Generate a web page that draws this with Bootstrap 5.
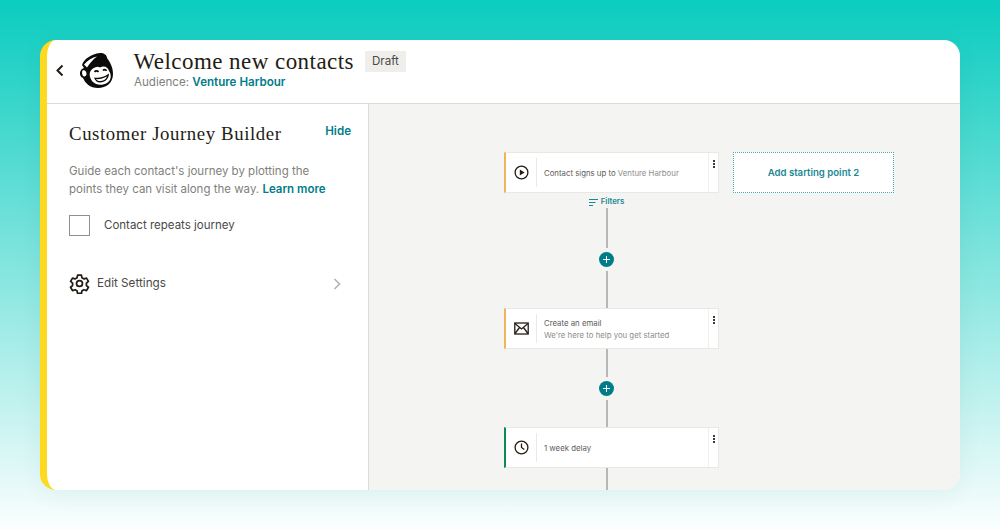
<!DOCTYPE html>
<html lang="en">
<head>
  <meta charset="UTF-8">
  <title>Customer Journey Builder</title>
  <meta name="viewport" content="width=device-width, initial-scale=1">
  <link href="https://cdn.jsdelivr.net/npm/bootstrap@5.3.2/dist/css/bootstrap.min.css" rel="stylesheet">
  <style>
    html, body { height: 530px; overflow: hidden; }
    body { background: linear-gradient(180deg, #0accbf 0%, #fbfefe 100%); font-family: "Inter", "Liberation Sans", sans-serif; padding: 40px 40px 40px; color: #3b3938; }
    .app-shell { height: 450px; border-radius: 16px; overflow: hidden; background: #fff; border-left: 7px solid #ffd91f; box-shadow: 0 4px 24px rgba(0,60,60,.06); }
    .app-head { height: 64px; border-bottom: 1px solid #dcdcda; flex: none; padding-bottom: 4px; }
    .back-btn { width: 87px; padding-left: 8px; }
    .back-arrow { margin-top: 2px; }
    .logo-mark { margin-left: 14px; margin-top: 1px; }
    .head-title { font-family: "Liberation Serif", serif; font-size: 23px; line-height: 26px; color: #241c15; letter-spacing: .45px; margin: 0 0 0 -.5px; }
    .draft-tag { background: #efeeea; font-size: 11.6px; line-height: 21px; padding: 0 7px; color: #4b4947; margin-left: 11px; margin-top: -2px; }
    .head-sub { font-size: 11.6px; line-height: 15px; color: #80807d; margin-top: 0; }
    .teal-link { color: #007c89; font-weight: 600; text-decoration: none; }
    .side-panel { width: 322px; flex: none; border-right: 1px solid #dcdcda; padding: 20px 17px 0 22px; }
    .side-title { font-family: "Liberation Serif", serif; font-size: 18.8px; line-height: 20px; color: #241c15; letter-spacing: .6px; margin: 0; }
    .side-hide { font-size: 11.6px; line-height: 16px; margin-top: -1px; }
    .side-text { font-size: 11.5px; line-height: 18px; color: #7f7f7c; margin: 18px 0 0; max-width: 262px; }
    .repeat-box { width: 21px; height: 21px; border: 1px solid #8f8f8d; background: #fff; flex: none; }
    .repeat-row { margin-top: 17px; gap: 14px; font-size: 11.5px; color: #4b4947; }
    .settings-row { margin-top: 37px; font-size: 11.7px; color: #4b4947; }
    .settings-name { margin-left: 7px; }
    .go-next { margin-right: 10px; }
    .journey-canvas { background: #f4f4f2; padding: 48px 0 0 135px; overflow: hidden; }
    .step-node { width: 215px; height: 41px; background: #fff; border: 1px solid #e8e8e6; border-left: 2px solid #f1b35c; flex: none; }
    .step-node.is-delay { border-left-color: #0d8a57; }
    .step-icon { width: 30px; flex: none; }
    .step-main { border-left: 1px solid #e9e9e7; margin: 5px 0; padding-left: 7px; font-size: 7.8px; line-height: 12px; color: #5d5c5a; flex: 1; height: 29px; }
    .step-muted { color: #8e8e8b; }
    .step-menu { width: 10px; flex: none; border-left: 1px solid #efefed; position: relative; }
    .step-menu::before { content: ""; position: absolute; left: 4px; top: 7px; width: 2px; height: 2px; background: #3b3938; box-shadow: 0 3px 0 #3b3938, 0 6px 0 #3b3938; }
    .add-start { width: 161px; height: 41px; margin-left: 14px; padding-top: 1px; background: #fff; border: 1px dotted #4aa9b2; font-size: 9.6px; font-weight: 600; color: #1b8792; }
    .link-col { width: 205px; flex: none; }
    .link-line { width: 2px; background: #b7b7b5; flex: none; }
    .filters-tag { height: 12px; margin-top: 3px; font-size: 7.8px; font-weight: 600; color: #1b8792; gap: 3px; }
    .plus-dot { width: 15px; height: 15px; border-radius: 50%; background: #007c89; flex: none; }
  </style>
</head>
<body>

<div class="app-shell d-flex flex-column">
  <header class="app-head d-flex align-items-center">
    <div class="back-btn d-flex align-items-center">
      <svg class="back-arrow" width="10" height="13" viewBox="0 0 10 13" fill="none"><path d="M7.5 1.5 2.5 6.5l5 5" stroke="#241c15" stroke-width="2"/></svg>
      <svg class="logo-mark" width="34" height="35" viewBox="0 0 34 35">
        <path d="M3 12 C5 6 12 1 21 0 C25 0 28 2 28 5 C31 9 34 14 34 21 C34 30 27 35 19 35 C11 35 6 30 4 25 C1 24 0 20 2 17 C3 16 4 15 5 15 Z" fill="#0c0b0a"/>
        <path d="M5 11.5 C9 7 13 4.5 18 3.5 C14 6.5 11 10 8 14.5 Z" fill="#fff"/>
        <path d="M3.5 17.5 C5.5 16.5 7.5 18 7.5 21 C7.5 23 5.5 24 4 23 C2.8 21 2.8 19 3.5 17.5Z" fill="#fff"/>
        <path d="M11 19 C13 15 18 12.5 21 14.5 C25 12.5 29 14 30 18 C33 22 32 28 28 30 C23 33 16 32 13 28 C11 25 10 22 11 19Z" fill="#fff"/>
        <path d="M15 24.5 C19 25.5 25 24.5 30 20.5 C30 25.5 26 29.5 21 29.5 C18 29.5 16 27.5 15 24.5Z" fill="#0c0b0a"/>
        <path d="M17 26 C20 26.5 24 25.5 28 23.5 C27 26.5 24 28 21 28 C19 28 18 27.5 17 26Z" fill="#fff"/>
        <path d="M15.5 19 C16.5 17.5 18.5 17.5 19.5 19 M24 17.5 C25 16.2 26.8 16.4 27.5 17.8" fill="none" stroke="#0c0b0a" stroke-width="1.6"/>
      </svg>
    </div>
    <div>
      <div class="d-flex align-items-center">
        <h1 class="head-title">Welcome new contacts</h1>
        <span class="draft-tag">Draft</span>
      </div>
      <div class="head-sub">Audience: <a href="#" class="teal-link">Venture Harbour</a></div>
    </div>
  </header>

  <div class="d-flex flex-grow-1 overflow-hidden">
    <aside class="side-panel">
      <div class="d-flex justify-content-between align-items-start">
        <h2 class="side-title">Customer Journey Builder</h2>
        <a href="#" class="teal-link side-hide">Hide</a>
      </div>
      <p class="side-text">Guide each contact's journey by plotting the points they can visit along the way. <a href="#" class="teal-link">Learn more</a></p>
      <div class="repeat-row d-flex align-items-center">
        <span class="repeat-box"></span>
        <span>Contact repeats journey</span>
      </div>
      <div class="settings-row d-flex align-items-center">
        <svg width="21" height="21" viewBox="0 0 24 24" fill="none" stroke="#241c15" stroke-width="2" stroke-linejoin="round"><circle cx="12" cy="12" r="3.4"/><path d="M9.8 2.5h4.4l.6 3 2.3 1.3 2.9-1 2.2 3.8-2.3 2 0 2.7 2.3 2-2.2 3.8-2.9-1-2.3 1.3-.6 3H9.8l-.6-3-2.3-1.3-2.9 1-2.2-3.8 2.3-2 0-2.7-2.3-2 2.2-3.8 2.9 1 2.3-1.3z"/></svg>
        <span class="settings-name">Edit Settings</span>
        <svg class="go-next ms-auto" width="8" height="12" viewBox="0 0 8 12" fill="none"><path d="M1.5 1 6.5 6l-5 5" stroke="#b3b3b1" stroke-width="1.6"/></svg>
      </div>
    </aside>

    <main class="journey-canvas flex-grow-1 d-flex flex-column">
      <div class="d-flex">
        <div class="step-node d-flex align-items-center">
          <div class="step-icon"><svg class="d-block mx-auto" width="15" height="15" viewBox="0 0 15 15"><circle cx="7.5" cy="7.5" r="6.4" fill="none" stroke="#241c15" stroke-width="1.3"/><path d="M5.8 4.5v6l4.8-3z" fill="#241c15"/></svg></div>
          <div class="step-main d-flex align-items-center"><span>Contact signs up to <span class="step-muted">Venture Harbour</span></span></div>
          <div class="step-menu align-self-stretch"></div>
        </div>
        <div class="add-start d-flex align-items-center justify-content-center">Add starting point 2</div>
      </div>

      <div class="link-col d-flex flex-column align-items-center">
        <div class="filters-tag d-flex align-items-center">
          <svg width="9" height="7" viewBox="0 0 9 7" fill="none" stroke="#1b8792" stroke-width="1"><path d="M0 .5h9M0 3.5h6.5M0 6.5h4"/></svg>
          Filters
        </div>
        <div class="link-line" style="height:40px"></div>
        <div class="plus-dot d-flex align-items-center justify-content-center my-1"><svg width="7" height="7" viewBox="0 0 7 7"><path d="M3.5 0v7M0 3.5h7" stroke="#fff" stroke-width="1"/></svg></div>
        <div class="link-line" style="height:37px"></div>
      </div>

      <div class="step-node d-flex align-items-center">
        <div class="step-icon"><svg class="d-block mx-auto" width="15" height="13" viewBox="0 0 15 13" fill="none" stroke="#241c15" stroke-width="1.3"><rect x=".8" y="1" width="13.4" height="11"/><path d="M1 1.5 7.5 7 14 1.5M1 11.5 5.5 5.5M14 11.5 9.5 5.5"/></svg></div>
        <div class="step-main d-flex flex-column justify-content-center"><span>Create an email</span><span class="step-muted">We're here to help you get started</span></div>
        <div class="step-menu align-self-stretch"></div>
      </div>

      <div class="link-col d-flex flex-column align-items-center">
        <div class="link-line" style="height:28px"></div>
        <div class="plus-dot d-flex align-items-center justify-content-center my-1"><svg width="7" height="7" viewBox="0 0 7 7"><path d="M3.5 0v7M0 3.5h7" stroke="#fff" stroke-width="1"/></svg></div>
        <div class="link-line" style="height:27px"></div>
      </div>

      <div class="step-node is-delay d-flex align-items-center">
        <div class="step-icon"><svg class="d-block mx-auto" width="15" height="15" viewBox="0 0 15 15" fill="none" stroke="#241c15" stroke-width="1.3"><circle cx="7.5" cy="7.5" r="6.4"/><path d="M7.5 3.5v4l2.8 2"/></svg></div>
        <div class="step-main d-flex align-items-center">1 week delay</div>
        <div class="step-menu align-self-stretch"></div>
      </div>

      <div class="link-col d-flex flex-column align-items-center">
        <div class="link-line" style="height:30px"></div>
      </div>
    </main>
  </div>
</div>

<script src="https://cdn.jsdelivr.net/npm/bootstrap@5.3.2/dist/js/bootstrap.bundle.min.js"></script>
</body>
</html>
